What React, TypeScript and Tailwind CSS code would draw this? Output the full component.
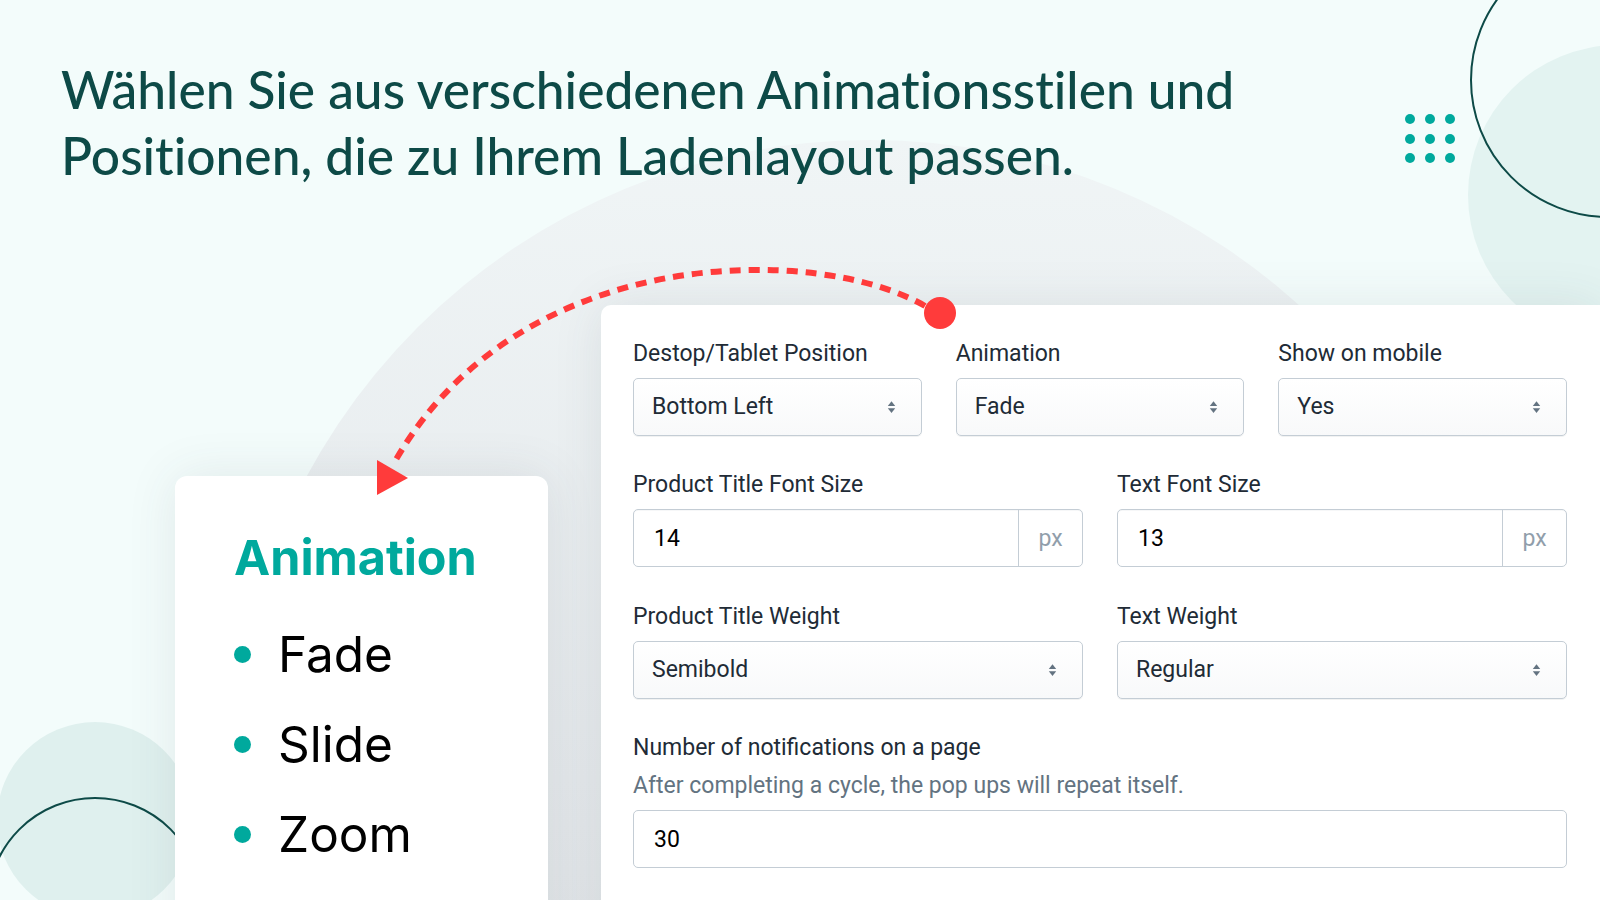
import React from "react";

const Arrows = () => (
  <svg width="9" height="16" viewBox="0 0 9 16" className="shrink-0">
    <polygon points="0.8,7 4.5,2.2 8.2,7" fill="#637381" />
    <polygon points="0.8,9.2 4.5,14 8.2,9.2" fill="#637381" />
  </svg>
);

const Label = ({ children }: { children: React.ReactNode }) => (
  <div className="text-[23px] leading-[28px] text-[#212b36] mb-[10px] whitespace-nowrap">{children}</div>
);

const Select = ({ value }: { value: string }) => (
  <div className="h-[58px] flex items-center justify-between pl-[18px] pr-[25px] rounded-[5px] border border-[#c4cdd5] bg-gradient-to-b from-white to-[#f8f9fa] shadow-[0_1px_0_rgba(22,29,37,0.06)] text-[23px] text-[#212b36]">
    <span>{value}</span>
    <Arrows />
  </div>
);

const PxInput = ({ value }: { value: string }) => (
  <div className="h-[58px] flex rounded-[5px] border border-[#c4cdd5] bg-white shadow-[inset_0_1px_0_rgba(99,115,129,0.06)] text-[23px]">
    <div className="flex-1 flex items-center pl-[20px] pt-[2px] text-[#000]">{value}</div>
    <div className="w-[64px] border-l border-[#c4cdd5] flex items-center justify-center pt-[2px] text-[#919eab]">px</div>
  </div>
);

export default function App() {
  return (
    <div className="relative w-[1600px] h-[900px] overflow-hidden bg-[#f3fcfb]">
      {/* background decoration */}
      <div className="absolute left-[230px] top-[140px] w-[1280px] h-[1280px] rounded-full bg-gradient-to-b from-[#f0f5f6] via-[#e4e8eb] to-[#d6dadd]" />
      <div className="absolute left-[1468px] top-[45px] w-[300px] h-[300px] rounded-full bg-[#e3f3f1]" />
      <div className="absolute left-[1470px] top-[-58px] w-[276px] h-[276px] rounded-full border-[2px] border-[#0d4a47]" />
      <div className="absolute left-[-3px] top-[722px] w-[196px] h-[196px] rounded-full bg-[#dff0ee]" />
      <div className="absolute left-[-13px] top-[797px] w-[216px] h-[216px] rounded-full border-[2.5px] border-[#0d4a47]" />
      <div className="absolute left-[1405px] top-[114px] grid grid-cols-3 gap-x-[10px] gap-y-[9.5px]">
        {Array.from({ length: 9 }).map((_, i) => (
          <div key={i} className="w-[10px] h-[10px] rounded-full bg-[#00a99d]" />
        ))}
      </div>

      <div className="relative flex flex-col h-full">
        <h1
          className="pl-[61px] pt-[56px] text-[51.5px] leading-[66px] font-medium text-[#0d4a47] whitespace-nowrap [font-variant-ligatures:none]"
          style={{ fontFamily: "Lato, 'Noto Sans', sans-serif" }}
        >
          Wählen Sie aus verschiedenen Animationsstilen und
          <br />
          Positionen, die zu Ihrem Ladenlayout passen.
        </h1>

        <div className="flex flex-1 items-stretch mt-[117px]">
          <div
            className="ml-[175px] mt-[171px] w-[373px] h-[600px] bg-white rounded-[12px] pl-[59px] pt-[57px] shadow-[0_0_50px_rgba(60,70,80,0.10)]"
            style={{ fontFamily: "Inter, sans-serif" }}
          >
            <div className="text-[48.5px] leading-[50px] font-bold text-[#00a99d]">Animation</div>
            <div className="mt-[26px] flex flex-col">
              {["Fade", "Slide", "Zoom"].map((t) => (
                <div key={t} className="flex items-center h-[90px] gap-[27px]">
                  <div className="w-[17px] h-[17px] rounded-full bg-[#00a99d]" />
                  <span className="text-[49.5px] leading-[90px] text-black">{t}</span>
                </div>
              ))}
            </div>
          </div>

          <div
            className="ml-[53px] flex-1 h-[700px] bg-white rounded-tl-[10px] pl-[32px] pr-[33px] pt-[35px] shadow-[0_0_50px_rgba(60,70,80,0.10)]"
            style={{ fontFamily: "Roboto, sans-serif" }}
          >
            <div className="grid grid-cols-3 gap-x-[34px]">
              <div>
                <Label>Destop/Tablet Position</Label>
                <Select value="Bottom Left" />
              </div>
              <div>
                <Label>Animation</Label>
                <Select value="Fade" />
              </div>
              <div>
                <Label>Show on mobile</Label>
                <Select value="Yes" />
              </div>
            </div>

            <div className="grid grid-cols-2 gap-x-[34px] mt-[35px]">
              <div>
                <Label>Product Title Font Size</Label>
                <PxInput value="14" />
              </div>
              <div>
                <Label>Text Font Size</Label>
                <PxInput value="13" />
              </div>
            </div>

            <div className="grid grid-cols-2 gap-x-[34px] mt-[36px]">
              <div>
                <Label>Product Title Weight</Label>
                <Select value="Semibold" />
              </div>
              <div>
                <Label>Text Weight</Label>
                <Select value="Regular" />
              </div>
            </div>

            <div className="mt-[35px]">
              <Label>Number of notifications on a page</Label>
              <div className="mb-[10px] text-[23px] leading-[28px] text-[#637381] whitespace-nowrap">
                After completing a cycle, the pop ups will repeat itself.
              </div>
              <div className="h-[58px] flex items-center pl-[20px] pt-[2px] rounded-[5px] border border-[#c4cdd5] bg-white text-[23px] text-black">
                30
              </div>
            </div>
          </div>
        </div>
      </div>

      {/* red dashed arrow */}
      <svg className="absolute inset-0 pointer-events-none" width="1600" height="900" viewBox="0 0 1600 900">
        <path
          d="M 925 306 C 820 245, 520 240, 394 463"
          fill="none"
          stroke="#ff3b3b"
          strokeWidth="6"
          strokeDasharray="11 8"
        />
        <circle cx="940" cy="313" r="16" fill="#ff3b3b" />
        <polygon points="377,460 377,495 408,478" fill="#ff3b3b" />
      </svg>
    </div>
  );
}
